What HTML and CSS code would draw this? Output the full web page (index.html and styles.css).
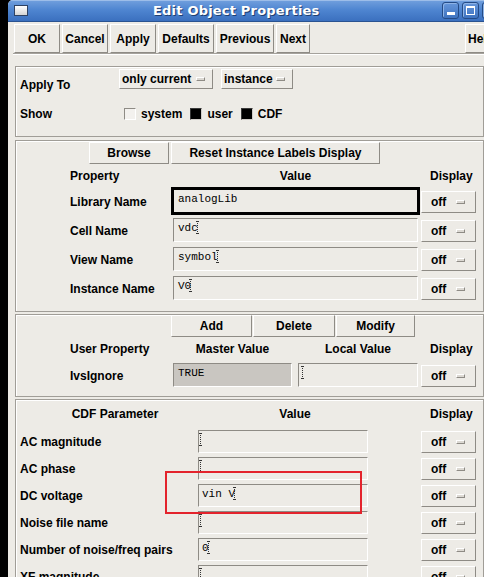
FILE: index.html
```html
<!DOCTYPE html>
<html>
<head>
<meta charset="utf-8">
<title>Edit Object Properties</title>
<link rel="stylesheet" href="styles.css">
</head>
<body>
<div class="screen">
  <div class="window">
    <div class="titlebar">
      <span class="winicon"></span>
      <span class="title">Edit Object Properties</span>
      <span class="wbtns">
        <span class="wbtn"><span class="g-min"></span></span>
        <span class="wbtn"><span class="g-max"></span></span>
        <span class="wbtn"><span class="g-close"></span></span>
      </span>
    </div>
    <div class="toolbar">
      <div class="btn tb w46">OK</div>
      <div class="btn tb w46">Cancel</div>
      <div class="btn tb w46">Apply</div>
      <div class="btn tb w56">Defaults</div>
      <div class="btn tb w58">Previous</div>
      <div class="btn tb w34">Next</div>
      <div class="btn tb help">Help</div>
    </div>
    <div class="sep"></div>

    <div class="frame f1">
      <div class="f1row1">
        <span class="f1label">Apply To</span>
        <div class="btn mbtn w94"><span>only current</span><span class="ind"></span></div>
        <div class="btn mbtn w72"><span>instance</span><span class="ind"></span></div>
      </div>
      <div class="f1row2">
        <span class="showlabel">Show</span>
        <span class="chk"></span><span class="chktext">system</span>
        <span class="chk on"></span><span class="chktext">user</span>
        <span class="chk on"></span><span class="chktext">CDF</span>
      </div>
    </div>

    <div class="frame f2">
      <div class="btnrow br2">
        <div class="btn sb w80">Browse</div>
        <div class="btn sb w209">Reset Instance Labels Display</div>
      </div>
      <div class="hdr h2">
        <span class="hcol-label">Property</span>
        <span class="hcol-value">Value</span>
        <span class="hcol-disp">Display</span>
      </div>
      <div class="prow">
        <span class="plabel">Library Name</span>
        <div class="field pf focus">analogLib</div>
        <div class="btn off"><span>off</span><span class="ind"></span></div>
      </div>
      <div class="prow">
        <span class="plabel">Cell Name</span>
        <div class="field pf">vdc<span class="caret"></span></div>
        <div class="btn off"><span>off</span><span class="ind"></span></div>
      </div>
      <div class="prow">
        <span class="plabel">View Name</span>
        <div class="field pf">symbol<span class="caret"></span></div>
        <div class="btn off"><span>off</span><span class="ind"></span></div>
      </div>
      <div class="prow">
        <span class="plabel">Instance Name</span>
        <div class="field pf">V0<span class="caret"></span></div>
        <div class="btn off"><span>off</span><span class="ind"></span></div>
      </div>
    </div>

    <div class="frame f3">
      <div class="btnrow br3">
        <div class="btn sb w81">Add</div>
        <div class="btn sb w82 ml1">Delete</div>
        <div class="btn sb w79 ml1">Modify</div>
      </div>
      <div class="hdr h3">
        <span class="hcol-label">User Property</span>
        <span class="hcol-master">Master Value</span>
        <span class="hcol-local">Local Value</span>
        <span class="hcol-disp">Display</span>
      </div>
      <div class="urow">
        <span class="plabel">IvsIgnore</span>
        <div class="field master">TRUE</div>
        <div class="field local"><span class="caret first"></span></div>
        <div class="btn off"><span>off</span><span class="ind"></span></div>
      </div>
    </div>

    <div class="frame f4">
      <div class="hdr h4">
        <span class="hcol-cdf">CDF Parameter</span>
        <span class="hcol-cval">Value</span>
        <span class="hcol-disp4">Display</span>
      </div>
      <div class="crow">
        <span class="clabel">AC magnitude</span>
        <div class="field cf"><span class="caret first"></span></div>
        <div class="btn off"><span>off</span><span class="ind"></span></div>
      </div>
      <div class="crow">
        <span class="clabel">AC phase</span>
        <div class="field cf"><span class="caret first"></span></div>
        <div class="btn off"><span>off</span><span class="ind"></span></div>
      </div>
      <div class="crow">
        <span class="clabel">DC voltage</span>
        <div class="field cf">vin V<span class="caret"></span></div>
        <div class="btn off"><span>off</span><span class="ind"></span></div>
      </div>
      <div class="crow">
        <span class="clabel">Noise file name</span>
        <div class="field cf"><span class="caret first"></span></div>
        <div class="btn off"><span>off</span><span class="ind"></span></div>
      </div>
      <div class="crow">
        <span class="clabel">Number of noise/freq pairs</span>
        <div class="field cf">0<span class="caret"></span></div>
        <div class="btn off"><span>off</span><span class="ind"></span></div>
      </div>
      <div class="crow">
        <span class="clabel">XF magnitude</span>
        <div class="field cf"><span class="caret first"></span></div>
        <div class="btn off"><span>off</span><span class="ind"></span></div>
      </div>
    </div>
  </div>
  <div class="annot"></div>
</div>
</body>
</html>
```

FILE: styles.css
```css
* { box-sizing: border-box; margin: 0; padding: 0; }
html, body { background: #000; }
body {
  width: 484px; height: 577px; overflow: hidden;
  font-family: "Liberation Sans", Arial, sans-serif;
  font-weight: bold; font-size: 12px; line-height: 14px; color: #000;
}
.screen { position: relative; width: 484px; height: 577px; background: #000; overflow: hidden; padding-left: 8px; }
.window { width: 476px; height: 577px; background: #edebe6; overflow: hidden; border-top-left-radius: 5px; }

/* title bar */
.titlebar {
  width: 540px; height: 22px; display: flex; align-items: flex-start;
  background: linear-gradient(#72a0de, #4f86d1 45%, #3b70bf);
  border-bottom: 1px solid #2a5391; padding-left: 6px;
  box-shadow: inset 0 1px 0 #9cbde9;
}
.winicon { flex: none; width: 14px; height: 11px; margin-top: 5px; background: linear-gradient(#ffffff, #d4d4d4); border: 1px solid #2e4263; }
.title {
  margin-left: 125px; color: #fff; white-space: nowrap;
  font-family: "DejaVu Sans", sans-serif; font-size: 13px; line-height: 21px; letter-spacing: 0.2px;
  text-shadow: 1px 1px 0 #203f70;
}
.wbtns { margin-left: auto; display: flex; gap: 3px; margin-top: 2px; padding-right: 49px; }
.wbtn {
  width: 17px; height: 17px; border: 1px solid #244b86; border-radius: 3px;
  background: linear-gradient(#6596da, #3f73c0);
  box-shadow: inset 1px 1px 0 #8db3e6; display: flex; justify-content: center; align-items: flex-start;
}
.g-min { width: 8px; height: 3px; background: #fff; margin-top: 9px; }
.g-max { width: 9px; height: 9px; border: 1px solid #fff; border-top-width: 2px; margin-top: 3px; }
.g-close { width: 9px; height: 9px; margin-top: 3px; }

/* buttons */
.btn {
  display: flex; align-items: center; justify-content: center; white-space: nowrap;
  border: 1px solid; border-color: #ffffff #8e8b85 #8e8b85 #ffffff; background: #edebe6; flex: none;
}
.toolbar { width: 540px; height: 31px; padding: 2px 0 0 6px; display: flex; gap: 2px; }
.tb { height: 29px; }
.w46 { width: 46px; } .w56 { width: 56px; } .w58 { width: 58px; } .w34 { width: 34px; }
.help { width: 46px; margin-left: 153px; justify-content: flex-start; padding-left: 2px; }
.sep { margin-left: 5px; width: 471px; height: 2px; border-top: 1px solid #a5a29c; border-bottom: 1px solid #ffffff; }

/* frames */
.frame {
  margin-left: 7px; width: 469px; border: 1px solid #a09d97;
  box-shadow: inset 1px 1px 0 #ffffff;
}
.f1 { margin-top: 11px; height: 71px; }
.f2 { margin-top: 3px; height: 172px; }
.f3 { margin-top: 2px; height: 83px; }
.f4 { margin-top: 2px; height: 220px; }

/* frame 1 */
.f1row1 { display: flex; height: 28px; padding-left: 4px; }
.f1label { width: 99px; margin-top: 11px; }
.mbtn { height: 20px; margin-top: 2px; justify-content: space-between; padding: 0 7px 0 2px; }
.w94 { width: 94px; }
.w72 { width: 72px; margin-left: 8px; }
.ind { width: 9px; height: 4px; border: 1px solid; border-color: #ffffff #8e8b85 #8e8b85 #ffffff; background: #dcd9d3; }
.f1row2 { display: flex; align-items: center; height: 18px; margin-top: 10px; padding-left: 4px; }
.showlabel { width: 104px; }
.chk { width: 12px; height: 12px; border: 1px solid; border-color: #8e8b85 #ffffff #ffffff #8e8b85; background: #f3f1ee; margin-right: 5px; flex: none; }
.chk.on { background: #000; border-color: #3a3a3a #d0cdc8 #d0cdc8 #3a3a3a; }
.chktext { margin-right: 8px; }

/* shared header/button rows */
.btnrow { display: flex; }
.br2 { margin-top: 1px; padding-left: 73px; gap: 2px; }
.br3 { padding-left: 155px; }
.sb { height: 22px; }
.w80 { width: 80px; } .w209 { width: 209px; }
.w81 { width: 81px; } .w82 { width: 82px; } .w79 { width: 79px; }
.ml1 { margin-left: 1px; }
.hdr { display: flex; align-items: center; }
.h2 { height: 23px; padding-left: 54px; }
.h3 { height: 24px; padding-left: 54px; }
.h4 { height: 28px; padding-left: 4px; }
.hcol-label { width: 103px; }
.hcol-value { width: 245px; text-align: center; margin-right: 3px; }
.hcol-disp { padding-left: 9px; }
.hcol-master { width: 119px; text-align: center; margin-right: 6px; }
.hcol-local { width: 120px; text-align: center; margin-right: 3px; }
.hcol-cdf { width: 190px; text-align: center; }
.hcol-cval { width: 170px; text-align: center; margin-right: 41px; }
.hcol-disp4 { padding-left: 9px; }

/* fields */
.field {
  flex: none; height: 24px; border: 1px solid; border-color: #8e8b85 #ffffff #ffffff #8e8b85;
  background: #edebe6; padding: 2px 4px 0 4px; white-space: nowrap;
  font-family: "Liberation Mono", "DejaVu Sans Mono", monospace; font-weight: normal; font-size: 11px; line-height: 14px;
}
.field.focus { outline: 2px solid #000; border-color: #000; }
.caret {
  display: inline-block; width: 3px; height: 13px; vertical-align: -3px; margin-left: -2px;
  background:
    linear-gradient(#333, #333) 0 0 / 3px 1px no-repeat,
    linear-gradient(#333, #333) 0 100% / 3px 1px no-repeat,
    repeating-linear-gradient(to bottom, #333 0 1px, transparent 1px 2px) 1px 0 / 1px 100% no-repeat;
}
.caret.first { margin-left: -3px; }

.prow { display: flex; align-items: center; height: 29px; padding-left: 54px; }
.plabel { width: 103px; }
.pf { width: 245px; margin-right: 3px; align-self: flex-start; margin-top: 2px; }
.off { width: 55px; height: 22px; justify-content: flex-start; padding-left: 9px; }
.off .ind { margin-left: 10px; }

.urow { display: flex; align-items: center; height: 29px; padding-left: 54px; }
.master { width: 119px; margin-right: 6px; background: #c9c6c1; align-self: flex-start; margin-top: 2px; }
.local { width: 120px; margin-right: 3px; align-self: flex-start; margin-top: 2px; padding-left: 2px; }
.local .caret.first { margin-left: 0; }

.crow { display: flex; align-items: center; height: 27px; padding-left: 4px; }
.clabel { width: 178px; }
.cf { width: 170px; height: 23px; margin-right: 53px; align-self: flex-start; margin-top: 2px; padding-left: 3px; }

.annot { position: absolute; left: 165px; top: 471px; width: 197px; height: 43px; border: 2px solid #e3232c; }
```
